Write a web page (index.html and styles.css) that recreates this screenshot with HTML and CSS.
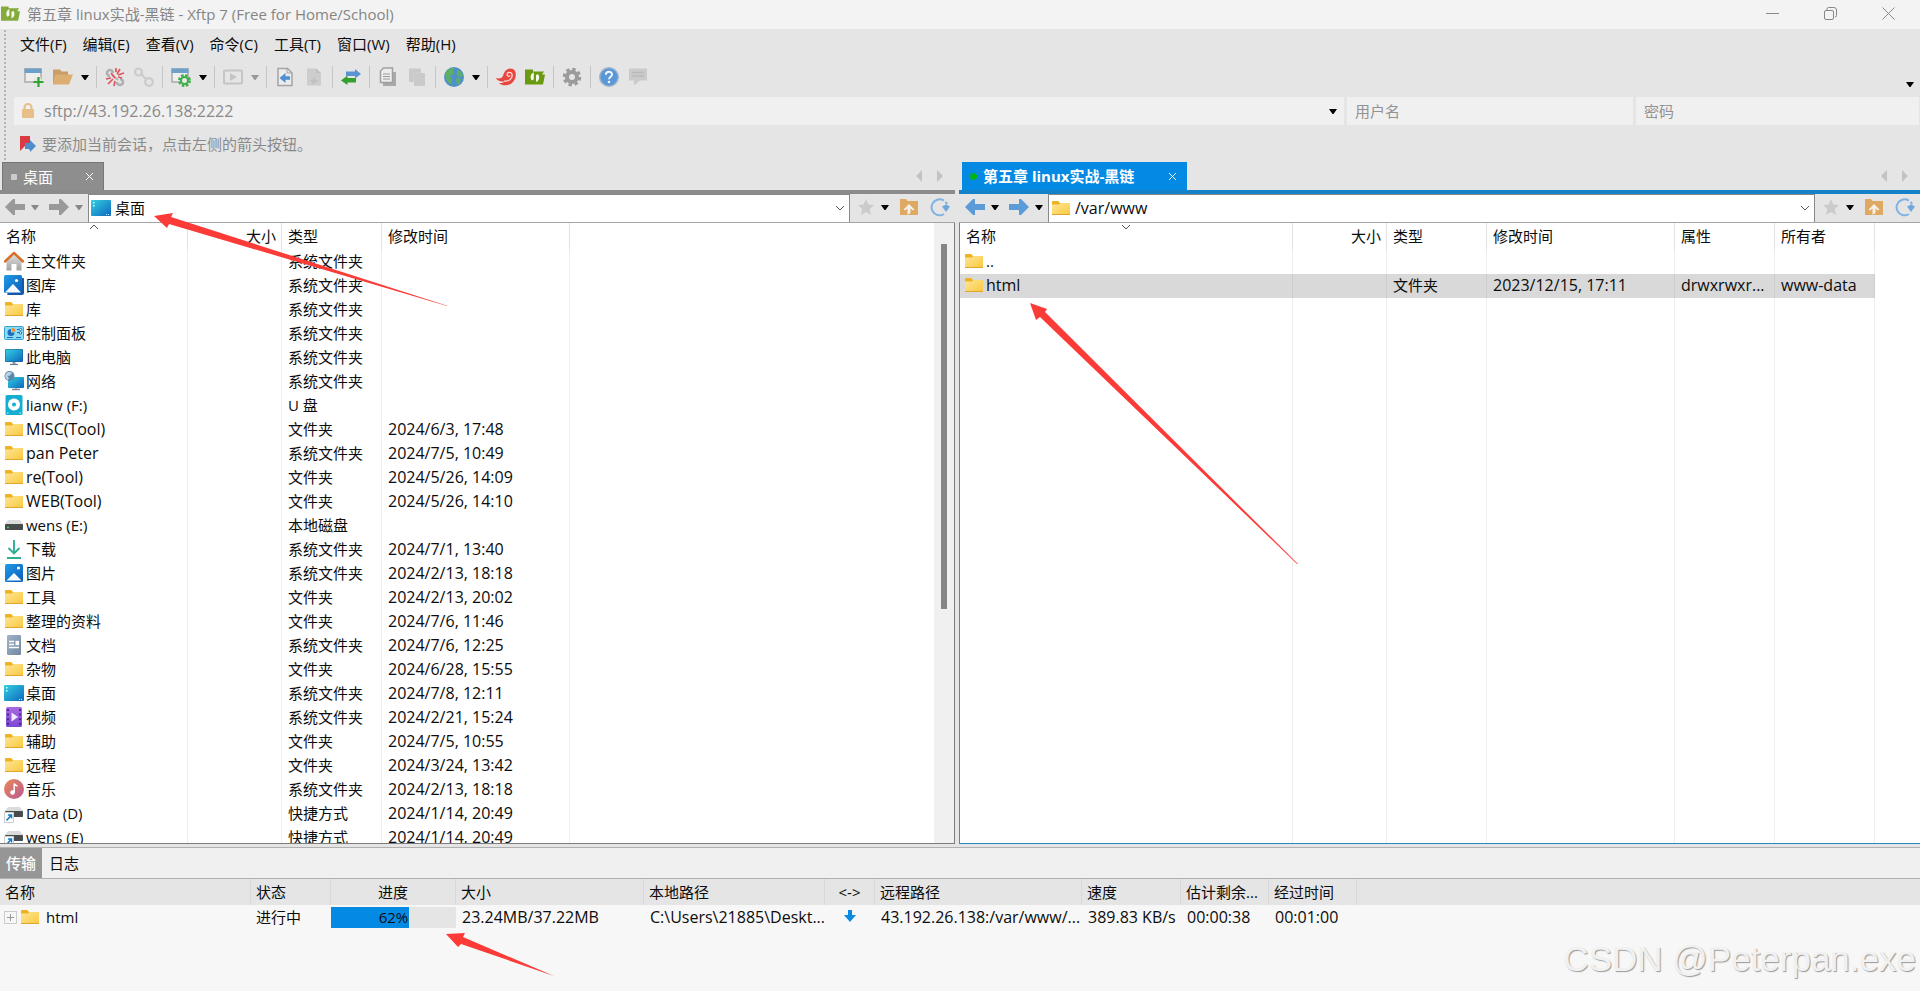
FILE: index.html
```html
<!DOCTYPE html>
<html lang="zh-CN">
<head>
<meta charset="utf-8">
<title>第五章 linux实战-黑链 - Xftp 7</title>
<link rel="stylesheet" href="styles.css">
</head>
<body>
<svg class="defs" width="0" height="0" aria-hidden="true">
  <defs>
    <linearGradient id="gFolder" x1="0" y1="0" x2="1" y2="1"><stop offset="0" stop-color="#ffe695"/><stop offset="1" stop-color="#f9c93f"/></linearGradient>
    <linearGradient id="gDesk" x1="0" y1="0" x2="1" y2="1"><stop offset="0" stop-color="#33d0e0"/><stop offset="1" stop-color="#0c68c0"/></linearGradient>
    <linearGradient id="gPic" x1="0" y1="0" x2="1" y2="1"><stop offset="0" stop-color="#1f9ce8"/><stop offset="1" stop-color="#0b5cb8"/></linearGradient>
    <linearGradient id="gHome" x1="0" y1="0" x2="0" y2="1"><stop offset="0" stop-color="#e2e2e2"/><stop offset="1" stop-color="#a2a2a2"/></linearGradient>
    <linearGradient id="gDoc" x1="0" y1="0" x2="1" y2="1"><stop offset="0" stop-color="#a2b4c8"/><stop offset="1" stop-color="#71879f"/></linearGradient>
    <linearGradient id="gVid" x1="0" y1="0" x2="0" y2="1"><stop offset="0" stop-color="#a86be0"/><stop offset="1" stop-color="#7c47d4"/></linearGradient>
    <linearGradient id="gMus" x1="0" y1="0" x2="1" y2="1"><stop offset="0" stop-color="#ea8a55"/><stop offset="1" stop-color="#b95a94"/></linearGradient>
    <symbol id="folder" viewBox="0 0 20 20"><path d="M1 4a1 1 0 0 1 1-1h5l2 2h9.500v4H1z" fill="#eab31f"/><path d="M1 6.500h7L9.500 5H18a1 1 0 0 1 1 1v10a1 1 0 0 1-1 1H2a1 1 0 0 1-1-1z" fill="url(#gFolder)"/><path d="M1 16.500h18" stroke="#e0a52c" stroke-width="1"/></symbol>
    <symbol id="desktop" viewBox="0 0 20 20"><rect y="2" width="20" height="16" rx="1" fill="url(#gDesk)"/><path d="M2 4h1.500v1.500H2zM2 7h1.500v1.500H2zM15 16h1v1h-1zM17 16h1v1h-1z" fill="#d9f7ff"/></symbol>
    <symbol id="home" viewBox="0 0 20 20"><path d="M2.500 9 10 2.500 17.500 9v10.500h-5V13h-5v6.500h-5z" fill="url(#gHome)"/><path d="M1 10.500 10 2l9 8.500" fill="none" stroke="#d8702c" stroke-width="2.500" stroke-linecap="round" stroke-linejoin="round"/></symbol>
    <symbol id="gallery" viewBox="0 0 20 20"><path d="M18 3h1a1 1 0 0 1 1 1v14a2 2 0 0 1-2 2H4a1 1 0 0 1-1-1z" fill="#1458a6"/><rect width="18" height="18" rx="1.500" fill="url(#gPic)"/><path d="M1 17.500 9 9l8 8.500z" fill="#f4faff"/><circle cx="12.500" cy="5.500" r="1.600" fill="#fff"/></symbol>
    <symbol id="picture" viewBox="0 0 20 20"><rect x="1" y="1" width="18" height="18" rx="1.500" fill="url(#gPic)"/><path d="M2.500 17.500 10 10l7.500 7.500z" fill="#f4faff"/><circle cx="14.500" cy="5" r="1.600" fill="#fff"/></symbol>
    <symbol id="control" viewBox="0 0 20 20"><rect x=".5" y="3.500" width="19" height="13" rx="1" fill="#8bdcf5" stroke="#3aa0cf"/><path d="M7 6a3.500 3.500 0 1 0 3.500 3.500H7z" fill="#1b70bd"/><path d="M8 5v3.500h3.500A3.500 3.500 0 0 0 8 5z" fill="#f08a2c"/><path d="M13 6.500h2M13 9.500h2M3 14.500h6M12 14.500h5" stroke="#1b70bd" stroke-width="1.200"/><circle cx="16.500" cy="6.500" r="1.200" fill="#fff" stroke="#1b70bd"/><circle cx="16.500" cy="10" r="1.200" fill="#fff" stroke="#1b70bd"/></symbol>
    <symbol id="pc" viewBox="0 0 20 20"><rect x="1" y="2" width="18" height="13" rx="1" fill="#1a5f8f"/><rect x="1.500" y="2.500" width="17" height="12" fill="url(#gDesk)"/><path d="M8.500 15h3v2h-3z" fill="#8b99a4"/><path d="M6 17.500h8" stroke="#707d88" stroke-width="1.200"/></symbol>
    <symbol id="network" viewBox="0 0 20 20"><rect x="4" y="6" width="16" height="11" rx="1" fill="url(#gDesk)"/><path d="M8 18.500h8M12 17v1.500" stroke="#7c8993" stroke-width="1.300"/><circle cx="5.500" cy="5" r="5" fill="#5a88a8"/><path d="M2 2.500C4 .5 7 .6 8 2L6 4.500 3.500 5 5 7.500 3.500 9C1 7.500.5 4.500 2 2.500z" fill="#b7d3e2"/></symbol>
    <symbol id="usb" viewBox="0 0 20 20"><rect x="1.500" width="17" height="20" rx="1.500" fill="#14afd0"/><circle cx="10" cy="9.500" r="6" fill="#fff"/><circle cx="10" cy="9.500" r="2" fill="#14afd0"/><path d="M3 18h1.500M15.500 18H17" stroke="#d9f7ff"/></symbol>
    <symbol id="drive" viewBox="0 0 20 20"><path d="M4 5h12l3 4H1z" fill="#d9dbdc"/><rect x="1" y="9" width="18" height="6" rx=".8" fill="#484b4c"/><path d="M3 12.500h2" stroke="#41d36e" stroke-width="1.300"/></symbol>
    <symbol id="drivelink" viewBox="0 0 20 20"><path d="M4 4h12l3 4H1z" fill="#d9dbdc"/><rect x="1" y="8" width="18" height="6" rx=".8" fill="#484b4c"/><rect x=".5" y="9.500" width="9" height="10" fill="#fff" stroke="#c8d0d6"/><path d="M2.500 17.500 7 12.500M4 12h3.500v3.500" fill="none" stroke="#1379be" stroke-width="1.500"/></symbol>
    <symbol id="download" viewBox="0 0 20 20"><path d="M10 1v13M4.500 9l5.500 5.500L15.500 9M3 19h14" fill="none" stroke="#2fae94" stroke-width="1.900"/></symbol>
    <symbol id="document" viewBox="0 0 20 20"><rect x="3" width="14" height="20" rx="1.200" fill="url(#gDoc)"/><path d="M5 6.500h5M5 9.500h5M5 12.500h10" stroke="#fff" stroke-width="1.400"/><path d="M11.500 5.800H15v4.400h-3.500z" fill="#fff"/></symbol>
    <symbol id="video" viewBox="0 0 20 20"><rect x="2" width="16" height="20" rx="1.500" fill="url(#gVid)"/><path d="M4 2v17M16 2v17" stroke="#442080" stroke-width="1.800" stroke-dasharray="2 2.600"/><path d="M7.500 5.500 14 10l-6.500 4.500z" fill="#f4eaff"/></symbol>
    <symbol id="music" viewBox="0 0 20 20"><circle cx="10" cy="10" r="10" fill="url(#gMus)"/><circle cx="8.500" cy="13.500" r="2.300" fill="#fff"/><path d="M10.200 13.500V4.500c.5 1.500 2 2.200 3.300 2.500" fill="none" stroke="#fff" stroke-width="1.500"/></symbol>
    <symbol id="caret" viewBox="0 0 8 5"><path d="M0 0h8L4.500 5h-1z" fill="currentColor"/></symbol>
    <symbol id="arrowL" viewBox="0 0 20 16"><path d="M0 8 8 0h2v5h10v6H10v5H8z" fill="currentColor"/></symbol>
    <symbol id="arrowR" viewBox="0 0 20 16"><path d="M20 8 12 0h-2v5H0v6h10v5h2z" fill="currentColor"/></symbol>
    <symbol id="chev" viewBox="0 0 10 6"><path d="m1 1 4 4 4-4" fill="none" stroke="#555"/></symbol>
    <symbol id="star" viewBox="0 0 20 20"><path d="m10 2 2.400 5.500 5.600.5-4.200 4 1.200 6-5-3-5 3 1.200-6L2 8l5.600-.5z" fill="#cbcbcb"/></symbol>
    <symbol id="up" viewBox="0 0 20 20"><path d="M1 2h6l1.500 2H19v14H1z" fill="#dfa863"/><path d="m10 7 5.500 5.500-1.500 1-2.500-2V16L8.500 18v-6.500l-2.500 2-1.500-1z" fill="#f4f0ea"/></symbol>
    <symbol id="refresh" viewBox="0 0 20 20"><path d="M14 17a8 8 0 1 1 3.500-8" fill="none" stroke="#7fb3e2" stroke-width="2" stroke-dasharray="34 2 3 2"/><path d="M12 9.500 16 7.500l4 2-4 5.500z" fill="#6fa7da"/></symbol>
    <symbol id="xf" viewBox="0 0 20 20"><path d="M0 2.500h8v2h11l-2 3h3l-2 10H0z" fill="#6a9a10"/><path d="M8.800 5.500C5.500 6.500 4.500 11 7 13.500l1.800-1.300zM11 15c3.300-1 4.300-5.500 1.800-8L11 8.300z" fill="#f7fbee"/></symbol>
  </defs>
</svg>

<header class="titlebar">
  <svg class="title-icon"><use href="#xf"/></svg>
  <h1 class="title">第五章 linux实战-黑链 - Xftp 7 (Free for Home/School)</h1>
  <div class="winbtns">
    <button aria-label="最小化"><svg width="13" height="13"><path d="M0 6.500h13" stroke="#888"/></svg></button>
    <button aria-label="还原"><svg width="13" height="13" fill="none" stroke="#888"><rect x=".5" y="3.500" width="9" height="9" rx="1.500"/><path d="M3 3V2a1.500 1.500 0 0 1 1.500-1.500H10A2.500 2.500 0 0 1 12.500 3v5.500A1.500 1.500 0 0 1 11 10"/></svg></button>
    <button aria-label="关闭"><svg width="13" height="13"><path d="m.5.5 12 12m0-12-12 12" stroke="#888"/></svg></button>
  </div>
</header>

<section class="bars">
  <nav class="menubar">
    <button>文件(F)</button><button>编辑(E)</button><button>查看(V)</button><button>命令(C)</button><button>工具(T)</button><button>窗口(W)</button><button>帮助(H)</button>
  </nav>
  <div class="toolbar" role="toolbar" aria-label="标准按钮">
    <button class="tool" aria-label="新建会话"><svg viewBox="0 0 20 20"><rect x="1" y="2" width="16" height="13" fill="#eee" stroke="#aaa" stroke-width="1.500"/><path d="M.5 1.500h17V6H.5z" fill="#6c9fca"/><path d="M14.500 10v9M10 14.500h9" stroke="#e5e5e5" stroke-width="4.500"/><path d="M14.500 10v10M9.500 15h10" stroke="#2fa52f" stroke-width="2.200"/></svg></button>
    <button class="tool" aria-label="打开会话"><svg viewBox="0 0 20 20"><path d="M0 2.500h7l1.500 2H15V8h4l-3.500 9H0z" fill="#c99d66"/><path d="M2 7.500h18L16 17.500H0z" fill="#ddae72"/></svg></button>
    <button class="drop" aria-label="更多会话"><svg><use href="#caret"/></svg></button>
    <span class="sep"></span>
    <button class="tool" aria-label="断开"><svg viewBox="0 0 20 20" fill="none"><path d="M8 6a3 3 0 1 0-3 3M12 15a3 3 0 1 0 3-3" stroke="#b0b0b0" stroke-width="2.600"/><path d="m7 8 6 5" stroke="#b0b0b0" stroke-width="2"/><path d="M11 1v4M15 2l-3 5M19 6l-6 2M17 11l-4-1M1 12l5-1M3 17l5-5M9 19l1-5M6 6l4 5" stroke="#dc5560" stroke-width="1.700"/></svg></button>
    <button class="tool" aria-label="重新连接"><svg viewBox="0 0 20 20" fill="none" stroke="#cbcbcb" stroke-width="2.200"><circle cx="4.500" cy="5" r="3.500"/><circle cx="15" cy="15" r="3.800"/><path d="m7 7 5 5"/></svg></button>
    <span class="sep"></span>
    <button class="tool" aria-label="属性"><svg viewBox="0 0 20 20"><rect x="1" y="2" width="16" height="13" fill="#eee" stroke="#aaa" stroke-width="1.500"/><path d="M.5 1.500h17V6H.5z" fill="#6c9fca"/><circle cx="13.500" cy="13.500" r="5" fill="none" stroke="#3fae49" stroke-width="3" stroke-dasharray="2.400 1.530"/><circle cx="13.500" cy="13.500" r="3.500" fill="#e9e9e9" stroke="#3fae49" stroke-width="2"/></svg></button>
    <button class="drop" aria-label="更多属性"><svg><use href="#caret"/></svg></button>
    <span class="sep"></span>
    <button class="tool" aria-label="运行"><svg viewBox="0 0 20 20"><rect x="1" y="3.500" width="18" height="13" rx="1" fill="none" stroke="#c5c5c5" stroke-width="2"/><path d="m7 6 7 4-7 4z" fill="#c5c5c5"/></svg></button>
    <button class="drop dim" aria-label="更多运行"><svg><use href="#caret"/></svg></button>
    <span class="sep"></span>
    <button class="tool" aria-label="传输到左侧"><svg viewBox="0 0 20 20"><path d="M3 1.500h9.500l4.500 4.500v12.500H3z" fill="#ececec" stroke="#a4a4a4" stroke-width="1.500"/><path d="M12 1.500V6h5" fill="none" stroke="#a4a4a4"/><path d="m4.500 11 6-5v3.200H15v3.600h-4.500V16z" fill="#4d8fd0"/></svg></button>
    <button class="tool" aria-label="传输到右侧"><svg viewBox="0 0 20 20"><path d="M3 1.500h9l5 5v12H3z" fill="#cdcdcd"/><path d="M12 1.500V6h5M6 13h3v-3l5 4-5 3" fill="#c0c0c0"/></svg></button>
    <span class="sep"></span>
    <button class="tool" aria-label="同步"><svg viewBox="0 0 20 20"><path d="M5 4.500h9V2l6 5-6 4.500V9H5z" fill="#5a94d2"/><path d="M15 11H6.500V8.500L0 13.500l6.500 4.500v-2.500H15z" fill="#33a02f"/></svg></button>
    <span class="sep"></span>
    <button class="tool" aria-label="复制"><svg viewBox="0 0 20 20"><path d="M5 5h13v14H5z" fill="#a9a9a9"/><path d="M5.500 1h9v14.500h-12V4z" fill="#ededed" stroke="#a0a0a0" stroke-width="1.500"/><path d="M5 7h7M5 9.500h7M5 12h7" stroke="#999"/></svg></button>
    <button class="tool" aria-label="粘贴"><svg viewBox="0 0 20 20"><path d="M2 1.500h12V6h4v13H7v-4H2z" fill="#cacaca"/><path d="M7 15V6h7" fill="none" stroke="#d2d2d2"/></svg></button>
    <span class="sep"></span>
    <button class="tool" aria-label="浏览器"><svg viewBox="0 0 20 20"><circle cx="10" cy="10" r="10" fill="#4f8fcb"/><path d="M2.500 4C5 1 9 .5 10.500 1L9 4l1 3-4 2 2 3.500-1 5C3 15 0 10 2.500 4zM13 3c3 0 5.500 3 6 6l-3 1-3.500-2zM12 11l5 1-1 4-3 2.500z" fill="#5caf67"/></svg></button>
    <button class="drop" aria-label="更多工具"><svg><use href="#caret"/></svg></button>
    <span class="sep"></span>
    <button class="tool" aria-label="Xshell"><svg viewBox="0 0 20 20"><path d="M0 11c4 1 6 0 7-2 1-5 5-9 10-7 4 2 3.500 9 0 13-4 4.500-11 4-14 1 4 .3 5-.5 5-1.500-4 .5-7-1-8-3.500z" fill="#e9463f"/><path d="M8 14c5 1 9-3 8-7-1-2.500-5-2-5 .5 0 2 2.500 2.500 3 .8" fill="none" stroke="#f5e5e3" stroke-width="1.200"/></svg></button>
    <button class="tool" aria-label="Xftp"><svg><use href="#xf"/></svg></button>
    <span class="sep"></span>
    <button class="tool" aria-label="选项"><svg viewBox="0 0 20 20" fill="none" stroke="#9b9b9b"><circle cx="10" cy="10" r="7.800" stroke-width="3" stroke-dasharray="3.400 2.726"/><circle cx="10" cy="10" r="5" stroke-width="4"/></svg></button>
    <span class="sep"></span>
    <button class="tool" aria-label="帮助"><svg viewBox="0 0 20 20"><circle cx="10" cy="10" r="9.300" fill="#5b97d6" stroke="#9cb4cc" stroke-width="1.400"/><path d="M6.800 7.800C7 3.500 13.200 4 13 7.500c0 2.200-3 2.300-3 4.800" fill="none" stroke="#f1f6fb" stroke-width="2"/><circle cx="10" cy="15" r="1.300" fill="#f1f6fb"/></svg></button>
    <button class="tool" aria-label="反馈"><svg viewBox="0 0 20 20"><path d="M1 1.500h18v12h-7L6 18.500v-5H1z" fill="#cbcbcb"/><path d="M4 5.500h12M4 9h12" stroke="#bababa" stroke-width="1.300"/></svg></button>
    <button class="drop overflow" aria-label="工具栏选项"><svg><use href="#caret"/></svg></button>
  </div>
  <form class="address">
    <div class="field host">
      <svg class="lock" viewBox="0 0 14 16"><path d="M3.500 7V4.500a3.500 3.500 0 0 1 7 0V7" fill="none" stroke="#e6bf86" stroke-width="2"/><rect x="1" y="6" width="12" height="9" rx="1" fill="#e8c087"/></svg>
      <input class="num" type="text" aria-label="地址" value="sftp://43.192.26.138:2222">
      <button type="button" class="drop" aria-label="历史地址"><svg><use href="#caret"/></svg></button>
    </div>
    <div class="field user"><input type="text" aria-label="用户名" placeholder="用户名"></div>
    <div class="field pass"><input type="password" aria-label="密码" placeholder="密码"></div>
  </form>
  <div class="tip">
    <button aria-label="添加当前会话"><svg width="16" height="16" viewBox="0 0 16 16"><path d="M0 0h10v14l-5-4-5 5z" fill="#dc3a43"/><path d="M5 7h5V4l6 6-6 6v-3H5z" fill="#4f8ccb"/></svg></button>
    <span>要添加当前会话，点击左侧的箭头按钮。</span>
  </div>
</section>

<main class="panes">
  <section class="pane local">
    <div class="tabs">
      <div class="tab"><span class="dot"></span><span class="tab-name">桌面</span><button aria-label="关闭标签"><svg width="7" height="7"><path d="m0 0 7 7m0-7-7 7" stroke="#fff"/></svg></button></div>
      <div class="scrolls"><button aria-label="向左"><svg width="6" height="12"><path d="M6 0v12L0 6z" fill="#c3c3c3"/></svg></button><button aria-label="向右"><svg width="6" height="12"><path d="M0 0v12l6-6z" fill="#c3c3c3"/></svg></button></div>
    </div>
    <div class="pathbar">
      <div class="nav"><button class="go" aria-label="后退"><svg><use href="#arrowL"/></svg></button><button class="drop" aria-label="后退历史"><svg><use href="#caret"/></svg></button><button class="go" aria-label="前进"><svg><use href="#arrowR"/></svg></button><button class="drop" aria-label="前进历史"><svg><use href="#caret"/></svg></button></div>
      <div class="combo"><svg class="ico"><use href="#desktop"/></svg><select aria-label="本地路径"><option>桌面</option></select><svg class="chev"><use href="#chev"/></svg></div>
      <div class="acts"><button aria-label="收藏"><svg class="ico"><use href="#star"/></svg></button><button class="drop" aria-label="收藏列表"><svg><use href="#caret"/></svg></button><button class="act" aria-label="上级目录"><svg class="ico"><use href="#up"/></svg></button><button class="act" aria-label="刷新"><svg class="ico"><use href="#refresh"/></svg></button></div>
    </div>
    <div class="list">
      <div class="viewport">
        <table class="files local-files">
          <colgroup><col class="c188"><col class="c94"><col class="c100"><col class="c188"></colgroup>
          <thead><tr><th class="sorted">名称<svg class="sort up-sort"><use href="#chev"/></svg></th><th class="r">大小</th><th>类型</th><th>修改时间</th></tr></thead>
          <tbody>
            <tr><td class="n"><svg class="ico"><use href="#home"/></svg>主文件夹</td><td></td><td>系统文件夹</td><td></td></tr>
            <tr><td class="n"><svg class="ico"><use href="#gallery"/></svg>图库</td><td></td><td>系统文件夹</td><td></td></tr>
            <tr><td class="n"><svg class="ico"><use href="#folder"/></svg>库</td><td></td><td>系统文件夹</td><td></td></tr>
            <tr><td class="n"><svg class="ico"><use href="#control"/></svg>控制面板</td><td></td><td>系统文件夹</td><td></td></tr>
            <tr><td class="n"><svg class="ico"><use href="#pc"/></svg>此电脑</td><td></td><td>系统文件夹</td><td></td></tr>
            <tr><td class="n"><svg class="ico"><use href="#network"/></svg>网络</td><td></td><td>系统文件夹</td><td></td></tr>
            <tr><td class="n"><svg class="ico"><use href="#usb"/></svg>lianw (F:)</td><td></td><td>U 盘</td><td></td></tr>
            <tr><td class="n num"><svg class="ico"><use href="#folder"/></svg>MISC(Tool)</td><td></td><td>文件夹</td><td class="num">2024/6/3, 17:48</td></tr>
            <tr><td class="n num"><svg class="ico"><use href="#folder"/></svg>pan Peter</td><td></td><td>系统文件夹</td><td class="num">2024/7/5, 10:49</td></tr>
            <tr><td class="n num"><svg class="ico"><use href="#folder"/></svg>re(Tool)</td><td></td><td>文件夹</td><td class="num">2024/5/26, 14:09</td></tr>
            <tr><td class="n num"><svg class="ico"><use href="#folder"/></svg>WEB(Tool)</td><td></td><td>文件夹</td><td class="num">2024/5/26, 14:10</td></tr>
            <tr><td class="n"><svg class="ico"><use href="#drive"/></svg>wens (E:)</td><td></td><td>本地磁盘</td><td></td></tr>
            <tr><td class="n"><svg class="ico"><use href="#download"/></svg>下载</td><td></td><td>系统文件夹</td><td class="num">2024/7/1, 13:40</td></tr>
            <tr><td class="n"><svg class="ico"><use href="#picture"/></svg>图片</td><td></td><td>系统文件夹</td><td class="num">2024/2/13, 18:18</td></tr>
            <tr><td class="n"><svg class="ico"><use href="#folder"/></svg>工具</td><td></td><td>文件夹</td><td class="num">2024/2/13, 20:02</td></tr>
            <tr><td class="n"><svg class="ico"><use href="#folder"/></svg>整理的资料</td><td></td><td>文件夹</td><td class="num">2024/7/6, 11:46</td></tr>
            <tr><td class="n"><svg class="ico"><use href="#document"/></svg>文档</td><td></td><td>系统文件夹</td><td class="num">2024/7/6, 12:25</td></tr>
            <tr><td class="n"><svg class="ico"><use href="#folder"/></svg>杂物</td><td></td><td>文件夹</td><td class="num">2024/6/28, 15:55</td></tr>
            <tr><td class="n"><svg class="ico"><use href="#desktop"/></svg>桌面</td><td></td><td>系统文件夹</td><td class="num">2024/7/8, 12:11</td></tr>
            <tr><td class="n"><svg class="ico"><use href="#video"/></svg>视频</td><td></td><td>系统文件夹</td><td class="num">2024/2/21, 15:24</td></tr>
            <tr><td class="n"><svg class="ico"><use href="#folder"/></svg>辅助</td><td></td><td>文件夹</td><td class="num">2024/7/5, 10:55</td></tr>
            <tr><td class="n"><svg class="ico"><use href="#folder"/></svg>远程</td><td></td><td>文件夹</td><td class="num">2024/3/24, 13:42</td></tr>
            <tr><td class="n"><svg class="ico"><use href="#music"/></svg>音乐</td><td></td><td>系统文件夹</td><td class="num">2024/2/13, 18:18</td></tr>
            <tr><td class="n"><svg class="ico"><use href="#drivelink"/></svg>Data (D)</td><td></td><td>快捷方式</td><td class="num">2024/1/14, 20:49</td></tr>
            <tr><td class="n"><svg class="ico"><use href="#drivelink"/></svg>wens (E)</td><td></td><td>快捷方式</td><td class="num">2024/1/14, 20:49</td></tr>
          </tbody>
        </table>
      </div>
      <div class="scrollbar"><div class="thumb"></div></div>
    </div>
  </section>

  <section class="pane remote">
    <div class="tabs">
      <div class="tab"><span class="dot"></span><span class="tab-name">第五章 linux实战-黑链</span><button aria-label="关闭标签"><svg width="7" height="7"><path d="m0 0 7 7m0-7-7 7" stroke="#fff"/></svg></button></div>
      <div class="scrolls"><button aria-label="向左"><svg width="6" height="12"><path d="M6 0v12L0 6z" fill="#c3c3c3"/></svg></button><button aria-label="向右"><svg width="6" height="12"><path d="M0 0v12l6-6z" fill="#c3c3c3"/></svg></button></div>
    </div>
    <div class="pathbar">
      <div class="nav"><button class="go" aria-label="后退"><svg><use href="#arrowL"/></svg></button><button class="drop" aria-label="后退历史"><svg><use href="#caret"/></svg></button><button class="go" aria-label="前进"><svg><use href="#arrowR"/></svg></button><button class="drop" aria-label="前进历史"><svg><use href="#caret"/></svg></button></div>
      <div class="combo"><svg class="ico"><use href="#folder"/></svg><select class="num" aria-label="远程路径"><option>/var/www</option></select><svg class="chev"><use href="#chev"/></svg></div>
      <div class="acts"><button aria-label="收藏"><svg class="ico"><use href="#star"/></svg></button><button class="drop" aria-label="收藏列表"><svg><use href="#caret"/></svg></button><button class="act" aria-label="上级目录"><svg class="ico"><use href="#up"/></svg></button><button class="act" aria-label="刷新"><svg class="ico"><use href="#refresh"/></svg></button></div>
    </div>
    <div class="list">
      <div class="viewport">
        <table class="files remote-files">
          <colgroup><col class="c333"><col class="c94"><col class="c100"><col class="c188"><col class="c100"><col class="c100"></colgroup>
          <thead><tr><th class="sorted">名称<svg class="sort"><use href="#chev"/></svg></th><th class="r">大小</th><th>类型</th><th>修改时间</th><th>属性</th><th>所有者</th></tr></thead>
          <tbody>
            <tr><td class="n"><svg class="ico"><use href="#folder"/></svg>..</td><td></td><td></td><td></td><td></td><td></td></tr>
            <tr class="selected"><td class="n num"><svg class="ico"><use href="#folder"/></svg>html</td><td></td><td>文件夹</td><td class="num">2023/12/15, 17:11</td><td class="num">drwxrwxr...</td><td class="num">www-data</td></tr>
            <tr class="filler"><td></td><td></td><td></td><td></td><td></td><td></td></tr>
          </tbody>
        </table>
      </div>
    </div>
  </section>
</main>

<section class="queue">
  <div class="queue-tabs" role="tablist"><button role="tab" aria-selected="true">传输</button><button role="tab" aria-selected="false">日志</button></div>
  <div class="queue-head-band">
    <table class="transfers">
      <colgroup><col class="q251"><col class="q80"><col class="q125"><col class="q188"><col class="q181"><col class="q50"><col class="q207"><col class="q99"><col class="q88"><col class="q88"></colgroup>
      <thead><tr><th>名称</th><th>状态</th><th class="c">进度</th><th>大小</th><th>本地路径</th><th class="c">&lt;-&gt;</th><th>远程路径</th><th>速度</th><th>估计剩余...</th><th>经过时间</th></tr></thead>
      <tbody><tr>
        <td class="job"><button class="expand" aria-label="展开"><svg width="7" height="7"><path d="M0 3.500h7M3.500 0v7" stroke="#999"/></svg></button><svg class="ico"><use href="#folder"/></svg>html</td>
        <td>进行中</td>
        <td class="bar-cell"><div class="bar"><div class="fill" style="width:62%"></div><span>62%</span></div></td>
        <td class="num">23.24MB/37.22MB</td><td class="num">C:\Users\21885\Deskt...</td>
        <td class="c"><svg width="12" height="12"><path d="M4 0h4v5h4l-6 7-6-7h4z" fill="#0a8ae0"/></svg></td>
        <td class="num">43.192.26.138:/var/www/...</td><td class="num">389.83 KB/s</td><td class="num">00:00:38</td><td class="num">00:01:00</td>
      </tr></tbody>
    </table>
  </div>
  <div class="watermark">CSDN @Peterpan.exe</div>
</section>

<svg class="notes" aria-hidden="true" fill="#fb3b38">
  <path d="M154 216 173 213 171 217 448 306 447 306 169 224 167 228z"/>
  <path d="M1030 303 1047 309 1045 312 1298 564 1297 564 1040 317 1036 320z"/>
  <path d="M446 934 465 933 463 937 554 976 461 944 458 947z"/>
</svg>
</body>
</html>
```
FILE: styles.css
```css
* { box-sizing: border-box; }

body {
  margin: 0;
  height: 100vh;
  display: flex;
  flex-direction: column;
  overflow: hidden;
  position: relative;
  background: #e5e5e5;
  color: #0c0c0c;
  font: 15px/20px "Open Sans", "Noto Sans CJK SC", sans-serif;
}

button, input, select {
  margin: 0;
  padding: 0;
  border: 0;
  background: none;
  color: inherit;
  font: inherit;
}
button { display: flex; align-items: center; justify-content: center; }
svg { flex: none; display: block; }
.defs { position: absolute; }
.ico { width: 20px; height: 20px; }
.num { font-size: 16px; }

/* title bar */
.titlebar {
  display: flex;
  align-items: center;
  height: 29px;
  padding: 0 0 2px 1px;
  background: #f3f3f3;
  color: #858585;
}
.title-icon { width: 19px; height: 19px; opacity: .8; }
.title { flex: 1; margin: 0 0 0 7px; font-size: 15px; font-weight: 400; }
.winbtns { display: flex; padding-right: 3px; }
.winbtns button { width: 58px; height: 28px; }

/* menu, toolbar, address */
.bars { position: relative; height: 133px; }
.bars::before {
  content: "";
  position: absolute;
  left: 4px;
  top: 1px;
  bottom: 2px;
  border-left: 2px dotted #b5b5b5;
}
.menubar { display: flex; height: 30px; padding-left: 12px; }
.menubar button { padding: 0 8px; }
.toolbar { display: flex; align-items: center; height: 36px; padding-left: 19px; }
.tool { width: 29px; height: 28px; }
.tool svg { width: 20px; height: 20px; }
.drop { width: 15px; height: 20px; color: #000; }
.drop svg { width: 8px; height: 5px; }
.dim { color: #999; }
.sep { width: 8px; height: 22px; display: flex; justify-content: center; }
.sep::before { content: ""; width: 1px; background: #c6c6c6; }
.overflow { margin: 0 1px 1px auto; align-self: flex-end; width: 18px; }
.address { display: flex; gap: 3px; height: 28px; margin-top: 2px; padding: 0 1px 0 14px; color: #8a8a8a; }
.field { display: flex; align-items: center; background: #f0f0f0; }
.field input { flex: 1; min-width: 0; height: 28px; padding-left: 8px; outline: 0; }
.field input::placeholder { color: #929292; opacity: 1; }
.host { flex: 1; padding: 0 4px 0 7px; }
.host input { padding-left: 9px; }
.lock { width: 14px; height: 16px; }
.user { width: 286px; }
.pass { width: 283px; }
.tip { display: flex; align-items: center; gap: 6px; height: 37px; padding-left: 20px; color: #8a8a8a; }

/* panes */
.panes { flex: 1; min-height: 0; display: grid; grid-template-columns: 955fr 961fr; column-gap: 4px; }
.pane { display: flex; flex-direction: column; min-width: 0; min-height: 0; }
.tabs { display: flex; justify-content: space-between; height: 28px; }
.local .tabs { padding-left: 2px; }
.remote .tabs { padding-left: 3px; }
.tab { display: flex; align-items: center; height: 28px; padding: 0 10px 0 8px; color: #fff; }
.local .tab { width: 102px; background: #8e8e8e; border: 1px solid #777; border-bottom: 0; }
.remote .tab { width: 225px; background: #058ae3; font-weight: 700; padding-right: 11px; }
.dot { width: 6px; height: 6px; margin-right: 6px; background: #ccc; border-radius: 1px; }
.remote .dot { width: 7px; height: 7px; background: #00b31b; border-radius: 50%; }
.tab-name { flex: 1; white-space: nowrap; }
.scrolls { display: flex; align-items: center; gap: 15px; padding-right: 12px; }
.pathbar {
  display: flex;
  height: 33px;
  background: #e5e5e5;
  border-top: 4px solid #8b8b8b;
  border-bottom: 1px solid #a5a5a5;
}
.remote .pathbar { border-top-color: #1382c8; }
.nav { display: flex; align-items: center; width: 88px; padding: 0 0 2px 5px; color: #999; }
.nav .drop { width: 19px; color: #888; }
.nav .drop + .go { margin-left: 5px; }
.remote .nav { width: 89px; padding-left: 6px; color: #5a9bd8; }
.remote .nav .drop { color: #000; }
.go { width: 20px; }
.go svg { width: 20px; height: 16px; }
.combo {
  flex: 1;
  min-width: 0;
  display: flex;
  align-items: center;
  gap: 4px;
  padding: 0 4px 1px 2px;
  background: #fff;
  border: 1px solid #888;
  border-width: 1px 1px 0;
}
.combo select { flex: 1; min-width: 0; height: 24px; appearance: none; outline: 0; }
.chev { width: 10px; height: 6px; }
.acts { display: flex; align-items: center; width: 105px; padding: 0 0 2px 6px; }
.acts .drop { width: 18px; }
.act { width: 32px; height: 24px; }
.list { flex: 1; min-height: 0; display: flex; background: #fff; border-bottom: 1px solid #7d7d7d; }
.local .list { border-right: 1px solid #7d7d7d; }
.remote .list { border-bottom-color: #2689bd; border-left: 1px solid #7d7d7d; }
.viewport { flex: 1; min-width: 0; height: 100%; overflow: hidden; }
.scrollbar { width: 20px; padding: 21px 6px 0 7px; background: #f0f0f0; }
.thumb { height: 61%; width: 6px; background: #858585; }

/* tables */
table { border-collapse: separate; border-spacing: 0; table-layout: fixed; }
th { font-weight: 400; text-align: left; }
th, td { padding: 0 0 0 6px; white-space: nowrap; overflow: hidden; }
.c { padding: 0; text-align: center; }
td.c svg { margin: 0 auto; }
.files { width: 570px; }
.remote-files { width: 915px; height: 100%; }
.files th { height: 27px; padding-bottom: 2px; border-right: 1px solid #e2e2e2; }
.files td { height: 24px; padding-bottom: 2px; border-right: 1px solid #eee; }
.files .r { padding: 0 5px 2px 0; text-align: right; }
.files .n { padding-left: 4px; }
.n .ico { display: inline-block; vertical-align: middle; margin: -2px 2px 0 0; }
.files .filler td { height: auto; }
.selected td { background: #d9d9d9; border-right-color: #cdcdcd; }
.sorted { position: relative; }
.sort { position: absolute; top: 1px; left: 50%; width: 10px; height: 6px; margin-left: -5px; }
.up-sort { transform: scaleY(-1); }
.c94 { width: 94px; }
.c100 { width: 100px; }
.c188 { width: 188px; }
.c333 { width: 333px; }

/* transfer queue */
.queue { position: relative; height: 147px; background: #f7f7f7; border-top: 3px solid #e5e5e5; }
.queue-tabs { display: flex; height: 32px; background: #f0f0f0; border-top: 1px solid #b0b0b0; border-bottom: 1px solid #b0b0b0; }
.queue-tabs button { width: 42px; }
.queue-tabs button + button { width: 44px; }
.queue-tabs [aria-selected="true"] { background: #969696; color: #fff; font-weight: 500; }
.queue-head-band { background: linear-gradient(#e5e5e5, #e5e5e5) 0 0 / 100% 26px no-repeat; }
.transfers { width: 1357px; }
.transfers th { height: 26px; padding-left: 5px; border-right: 1px solid #d8d8d8; }
.transfers td { height: 24px; padding-left: 5px; }
.transfers .num { padding-left: 6px; }
.transfers .c { padding: 0; }
.transfers td.c { padding-bottom: 3px; }
.transfers .job { display: flex; align-items: center; padding-left: 4px; }
.expand { width: 13px; height: 13px; margin-right: 3px; border: 1px solid #ccc; }
.job .ico { margin-right: 6px; }
.transfers .bar-cell { padding: 0; }
.bar { position: relative; height: 21px; background: #e5e5e5; text-align: center; }
.fill { position: absolute; top: 0; bottom: 0; left: 0; background: #058ae3; }
.bar span { position: relative; }
.q251 { width: 251px; }
.q80 { width: 80px; }
.q125 { width: 125px; }
.q188 { width: 188px; }
.q181 { width: 181px; }
.q50 { width: 50px; }
.q207 { width: 207px; }
.q99 { width: 99px; }
.q88 { width: 88px; }
.watermark {
  position: absolute;
  right: 4px;
  bottom: 10px;
  color: #f1f1f1;
  font: 35px/44px "Liberation Sans", sans-serif;
  text-shadow: 1px 1px 1px #999;
}

/* arrows drawn over the window */
.notes { position: absolute; inset: 0; width: 100%; height: 100%; pointer-events: none; }
```
